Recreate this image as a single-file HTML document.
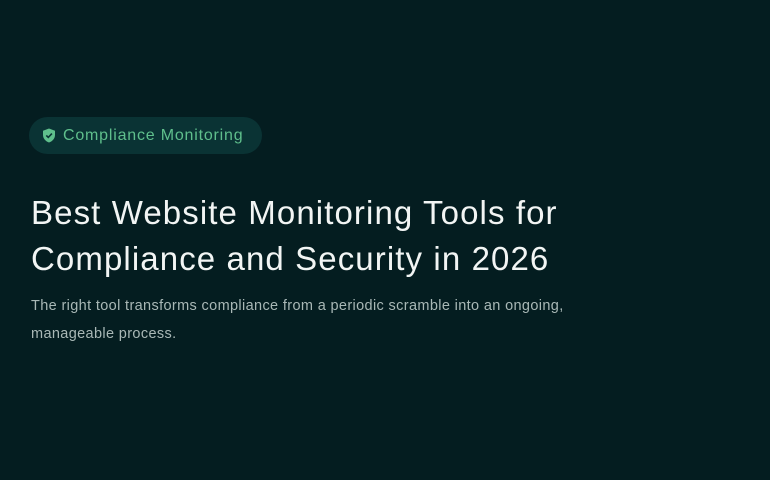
<!DOCTYPE html>
<html><head><style>
body{margin:0;width:770px;height:480px;background:#041d20;font-family:"Liberation Sans",sans-serif;overflow:hidden;position:relative}
.pill{position:absolute;left:29px;top:117px;width:233px;height:37px;border-radius:19px;background:#0a3334;}
.pill svg{position:absolute;left:13px;top:11px}
.pill span{position:absolute;left:34px;top:10px;font-size:16px;color:#5fbf8c;letter-spacing:0.8px}
h1{position:absolute;left:31px;top:190px;margin:0;font-weight:400;font-size:33px;line-height:46px;color:#f2f5f4;letter-spacing:1.1px}
p{position:absolute;left:31px;top:292px;margin:0;font-size:14.5px;line-height:28px;color:#a9b8b6;width:600px;letter-spacing:0.36px}
</style></head><body>
<div class="pill"><svg width="14" height="15" viewBox="0 0 14 15"><path d="M7 0.5L13 2.8V7c0 3.5-2.6 6.3-6 7.5C3.6 13.3 1 10.5 1 7V2.8z" fill="#5fbf8c"/><path d="M4.3 7.4l2 2 3.6-3.8" stroke="#0a3334" stroke-width="1.6" fill="none"/></svg><span>Compliance Monitoring</span></div>
<h1>Best Website Monitoring Tools for<br>Compliance and Security in 2026</h1>
<p>The right tool transforms compliance from a periodic scramble into an ongoing,<br>manageable process.</p>
</body></html>
